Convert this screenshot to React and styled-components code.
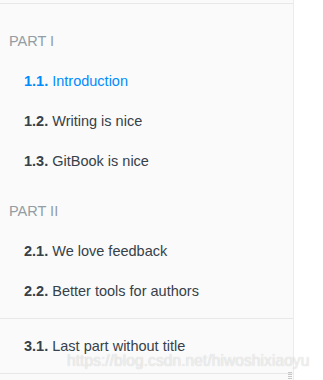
import React from "react";
import styled, { createGlobalStyle } from "styled-components";

const Global = createGlobalStyle`
  html, body { margin: 0; padding: 0; background: #fff; }
  body { font-family: "Liberation Sans", Arial, sans-serif; }
`;

const Page = styled.div`
  position: relative;
  width: 323px;
  height: 380px;
  overflow: hidden;
  background: #fff;
`;

const Sidebar = styled.nav`
  width: 293px;
  height: 380px;
  background: #fafafa;
  border-right: 1px solid #ececec;
  box-sizing: content-box;
`;

const Summary = styled.ul`
  list-style: none;
  margin: 0;
  padding: 3px 0 0;
  font-size: 14.5px;
  line-height: 20px;
`;

const Divider = styled.li`
  height: 1px;
  margin: 7px 0;
  background: #e8e8e8;
  &:first-child { margin-top: 0; }
`;

const Header = styled.li`
  padding: 20px 15px 10px 9px;
  text-transform: uppercase;
  color: #939da3;
`;

const Chapter = styled.li`
  padding: 10px 15px 10px 24px;
  color: ${(p) => (p.$active ? "#008cff" : "#364149")};
  white-space: nowrap;
  b { font-weight: 700; }
`;

const Watermark = styled.div`
  position: absolute;
  left: 67px;
  top: 352px;
  font-size: 15.7px;
  line-height: 18px;
  font-family: "Liberation Sans", Arial, sans-serif;
  color: rgba(255, 255, 255, 0.65);
  text-shadow: 0 0 1px rgba(0, 0, 0, 0.22);
  white-space: nowrap;
`;

const Grip = styled.div`
  position: absolute;
  left: 288px;
  top: 372px;
  width: 4px;
  height: 8px;
  background: repeating-linear-gradient(
    to bottom,
    #c8c8c8 0,
    #c8c8c8 1px,
    transparent 1px,
    transparent 2px
  );
`;

const parts = [
  {
    title: "Part I",
    items: [
      ["1.1.", "Introduction", true],
      ["1.2.", "Writing is nice"],
      ["1.3.", "GitBook is nice"],
    ],
  },
  {
    title: "Part II",
    items: [
      ["2.1.", "We love feedback"],
      ["2.2.", "Better tools for authors"],
    ],
  },
];

export default function App() {
  return (
    <Page>
      <Global />
      <Sidebar>
        <Summary>
          <Divider />
          {parts.map((part) => (
            <React.Fragment key={part.title}>
              <Header>{part.title}</Header>
              {part.items.map(([num, label, active]) => (
                <Chapter key={num} $active={active}>
                  <b>{num}</b> {label}
                </Chapter>
              ))}
            </React.Fragment>
          ))}
          <Divider />
          <Chapter>
            <b>3.1.</b> Last part without title
          </Chapter>
          <Divider />
        </Summary>
      </Sidebar>
      <Watermark>https://blog.csdn.net/hiwoshixiaoyu</Watermark>
      <Grip />
    </Page>
  );
}
